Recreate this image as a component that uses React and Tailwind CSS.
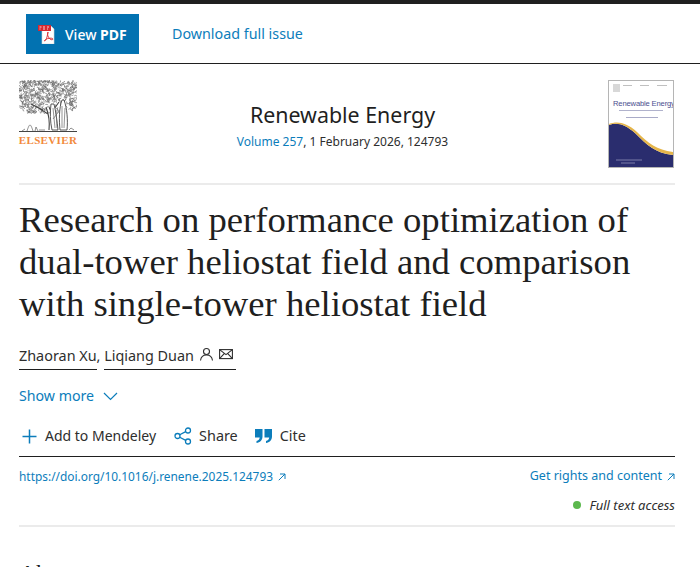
import React from "react";

const sans = { fontFamily: "'Noto Sans', sans-serif" };
const serif = { fontFamily: "'Liberation Serif', serif" };

function Tree() {
  const blobs = [];
  let seed = 7;
  const r = () => { seed = (seed * 9301 + 49297) % 233280; return seed / 233280; };
  for (let i = 0; i < 620; i++) {
    const x = r() * 58;
    const y = 1 + r() * 33;
    const nx = (x - 29) / 29;
    const ny = (y - 15) / 19;
    if (nx * nx * nx * nx + ny * ny * ny * ny > 1) continue;
    if (y > 22 && x > 26 && x < 50 && r() > 0.3) continue;
    const rot = r() * 6.28;
    const q = 1.1 + r() * 0.7;
    const c = Math.cos(rot) * q, s = Math.sin(rot) * q;
    blobs.push(`M${(x - c).toFixed(1)} ${(y - s).toFixed(1)}q${s.toFixed(1)} ${(-c).toFixed(1)} ${(2 * c).toFixed(1)} ${(2 * s).toFixed(1)}`);
  }
  return (
    <svg width="58" height="53" viewBox="0 0 58 53" fill="none" stroke="#6a6a6a" strokeWidth="0.650">
      <path d={blobs.join("")} />
      <path d="M27 27c3 8 4 14 3 23M30 27c3 6 5 14 5 23M18 27l11 7M40 22l-7 10M12 24l12 6" stroke="#444" strokeWidth="1.100" />
      <path d="M32 24c-1 8-1 17 1 26h6c-1-9-2-18-4-26zM43 20c-3 8-3 20-2 30h7c1-10 0-22-3-30z" fill="#fff" stroke="#444" strokeWidth="0.900" />
      <path d="M34 28l2 20M37 30l1 18M43 26v22M46 28l-1 20M41 30l-7 9" stroke="#666" strokeWidth="0.700" />
      <path d="M0 51.500h58" stroke="#444" strokeWidth="1" />
      <path d="M8 51c1-3 2-6 3-6s2 3 3 6M16 51l1-4 2 4M50 50l2-2 3 2M3 51l3-2M20 50h6" stroke="#555" />
    </svg>
  );
}

function Cover() {
  return (
    <div className="relative w-[66px] h-[88px] border border-[#b5b5b5] bg-white overflow-hidden shrink-0">
      <svg className="absolute left-0 bottom-0" width="64" height="46" viewBox="0 0 64 46">
        <path d="M0 4C8 1 16 3 26 12C38 24 46 32 64 34V46H0Z" fill="#2a2d6e" />
        <path d="M0 4C8 1 16 3 26 12C38 24 46 32 64 34V31C48 29 39 22 28 11C17 1 8 0 0 3Z" fill="#e5b54a" />
        <path d="M7 39h26M12 42h14" stroke="#8f90b8" strokeWidth="0.800" />
      </svg>
      <div className="absolute left-[4px] top-[3px] w-[7px] h-[8px] bg-[#d8d8d8]" />
      <div className="absolute left-[14px] top-[4px] w-[9px] h-px bg-[#c0c0c0]" />
      <div className="absolute left-[31px] top-[4px] w-[9px] h-px bg-[#c0c0c0]" />
      <div className="absolute left-[48px] top-[4px] w-[10px] h-px bg-[#c0c0c0]" />
      <p className="absolute left-[4px] top-[18px] whitespace-nowrap text-[7.6px] leading-[10px] tracking-[-0.15px] text-[#4a4e8e]" style={{ fontFamily: "'Liberation Sans', sans-serif" }}>Renewable Energy</p>
      <div className="absolute left-[10px] top-[29px] w-[44px] h-px bg-[#b0b2cc]" />
      <div className="absolute left-[17px] top-[36px] w-[32px] h-px bg-[#a9abc8]" />
    </div>
  );
}

function Arrow({ className = "" }) {
  return (
    <svg className={className} width="8" height="8" viewBox="0 0 8 8" fill="none" stroke="#0c7dbb" strokeWidth="1">
      <path d="M0.800 7.200L7 1M2 1h5v5" />
    </svg>
  );
}

export default function App() {
  return (
    <div className="w-[700px] h-[567px] overflow-hidden bg-white text-[#2e2e2e]" style={sans}>
      <div className="h-[4px] bg-[#1f1f1f]" />
      <div className="h-[60px] border-b border-[#1f1f1f] flex items-center pl-[26px]">
        <div className="w-[113px] h-[40px] bg-[#0272b1] flex items-center pl-[12px] mt-[1px]">
          <svg width="19" height="19" viewBox="0 0 19 19" className="mr-[8px]">
            <path d="M4 1h9l3 3v15H4z" fill="#fff" stroke="#d5d5d5" strokeWidth="0.600" />
            <rect x="0" y="0" width="13" height="6" fill="#d7282f" />
            <path d="M1.500 2h2M5 2h2M9 2h2M1.500 4h1M5 4h2M9 4h1" stroke="#fff" strokeWidth="0.800" />
            <path d="M10 7c-1 3 0 5 2 7 1 1 3 1 3 0s-3-1-5-0.500c-2 .5-4 2-3.500 2.500s2-2 2.500-4c.3-1.500.7-3 1-5" fill="none" stroke="#d7282f" strokeWidth="0.900" />
          </svg>
          <span className="text-white text-[14px] font-medium">View <b className="font-bold">PDF</b></span>
        </div>
        <span className="ml-[33px] text-[14.3px] text-[#0c7dbb]">Download full issue</span>
      </div>

      <div className="pl-[19px]">
        <div className="w-[656px] h-[121px] border-b-2 border-[#ebebeb] flex pt-[16px]">
          <div className="w-[58px] shrink-0 flex flex-col items-center">
            <Tree />
            <span className="text-[11px] leading-[11px] mt-[2px] font-bold tracking-[0.35px] text-[#f28a3c]" style={serif}>ELSEVIER</span>
          </div>
          <div className="flex-1 flex flex-col items-center pt-[21px]">
            <h2 className="text-[21.4px] leading-[28px] text-[#1f1f1f]">Renewable Energy</h2>
            <p className="text-[12px] leading-[18px] mt-[4px]"><span className="text-[#0c7dbb]">Volume 257</span>, 1 February 2026, 124793</p>
          </div>
          <div className="mr-[1px]"><Cover /></div>
        </div>

        <h1 className="mt-[14px] w-[656px] text-[36.7px] leading-[42px] text-[#1f1f1f]" style={serif}>
          Research on performance optimization of<br />dual-tower heliostat field and comparison<br />with single-tower heliostat field
        </h1>

        <div className="mt-[20px] flex items-center text-[14.4px] leading-[20px] h-[26px]">
          <span className="border-b border-[#1f1f1f] h-[24px]">Zhaoran Xu</span>
          <span className="h-[24px]">,&nbsp;</span>
          <span className="border-b border-[#1f1f1f] h-[24px] flex items-start">
            Liqiang Duan
            <svg className="ml-[5px] mt-[1px]" width="15" height="15" viewBox="0 0 15 15" fill="none" stroke="#2e2e2e" strokeWidth="1.100">
              <circle cx="7.500" cy="4.500" r="3" />
              <path d="M1.500 13.500c.5-3.500 3-5.500 6-5.500s5.500 2 6 5.500" />
            </svg>
            <svg className="ml-[5px] mt-[1px] mr-[3px]" width="14" height="15" viewBox="0 0 14 15" fill="none" stroke="#2e2e2e" strokeWidth="1.100">
              <rect x="0.600" y="2.600" width="12.800" height="9" />
              <path d="M0.600 2.600l6.400 5 6.400-5M0.600 11.600l4.600-5M13.400 11.600l-4.600-5" />
            </svg>
          </span>
        </div>

        <div className="mt-[15px] flex items-center text-[14.2px] leading-[20px] text-[#0c7dbb]">
          Show more
          <svg className="ml-[9px]" width="15" height="9" viewBox="0 0 15 9" fill="none" stroke="#0c7dbb" strokeWidth="1.200"><path d="M1 1l6.500 6.500L14 1" /></svg>
        </div>

        <div className="mt-[20px] w-[656px] h-[31px] border-b border-[#1f1f1f] flex items-start text-[14px] leading-[20px]">
          <svg className="ml-[3px] mt-[3px]" width="15" height="15" viewBox="0 0 15 15" stroke="#0c7dbb" strokeWidth="1.500"><path d="M7.500 0.500v14M0.500 7.500h14" /></svg>
          <span className="ml-[8px]">Add to Mendeley</span>
          <svg className="ml-[18px] mt-[1px]" width="18" height="18" viewBox="0 0 18 18" fill="none" stroke="#0c7dbb" strokeWidth="1.300">
            <circle cx="3.500" cy="9" r="2.500" /><circle cx="14" cy="3.500" r="2.500" /><circle cx="14" cy="14.500" r="2.500" />
            <path d="M5.700 7.800l6-3.200M5.700 10.200l6 3.200" />
          </svg>
          <span className="ml-[7px] text-[14.4px]">Share</span>
          <svg className="ml-[17px] mt-[3px]" width="17" height="14" viewBox="0 0 17 14" fill="#0c7dbb">
            <path d="M0 0h7.500v7.500C7.500 11 5 13.500 1.500 14v-2c2-.4 3-1.500 3.200-3.500H0zM9.500 0H17v7.500c0 3.500-2.500 6-6 6.500v-2c2-.4 3-1.500 3.200-3.500H9.500z" />
          </svg>
          <span className="ml-[8px] text-[14.4px]">Cite</span>
        </div>

        <div className="w-[656px] mt-[10px] flex justify-between items-center leading-[18px] text-[#0c7dbb]">
          <span className="flex items-center text-[11.9px]">https://doi.org/10.1016/j.renene.2025.124793<Arrow className="ml-[5px] mt-[1px]" /></span>
          <span className="flex items-center text-[12.5px]">Get rights and content<Arrow className="ml-[5px] mt-[1px]" /></span>
        </div>

        <div className="w-[656px] h-[31px] mt-[11px] border-b-2 border-[#ebebeb] flex justify-end items-start text-[13px] leading-[18px] italic">
          <span className="flex items-center"><span className="w-[8px] h-[8px] rounded-full bg-[#5cb84d] mr-[9px]" />Full text access</span>
        </div>

        <h2 className="mt-[30px] text-[24px] leading-[32px] text-[#1f1f1f]" style={serif}>Abstract</h2>
      </div>
    </div>
  );
}
